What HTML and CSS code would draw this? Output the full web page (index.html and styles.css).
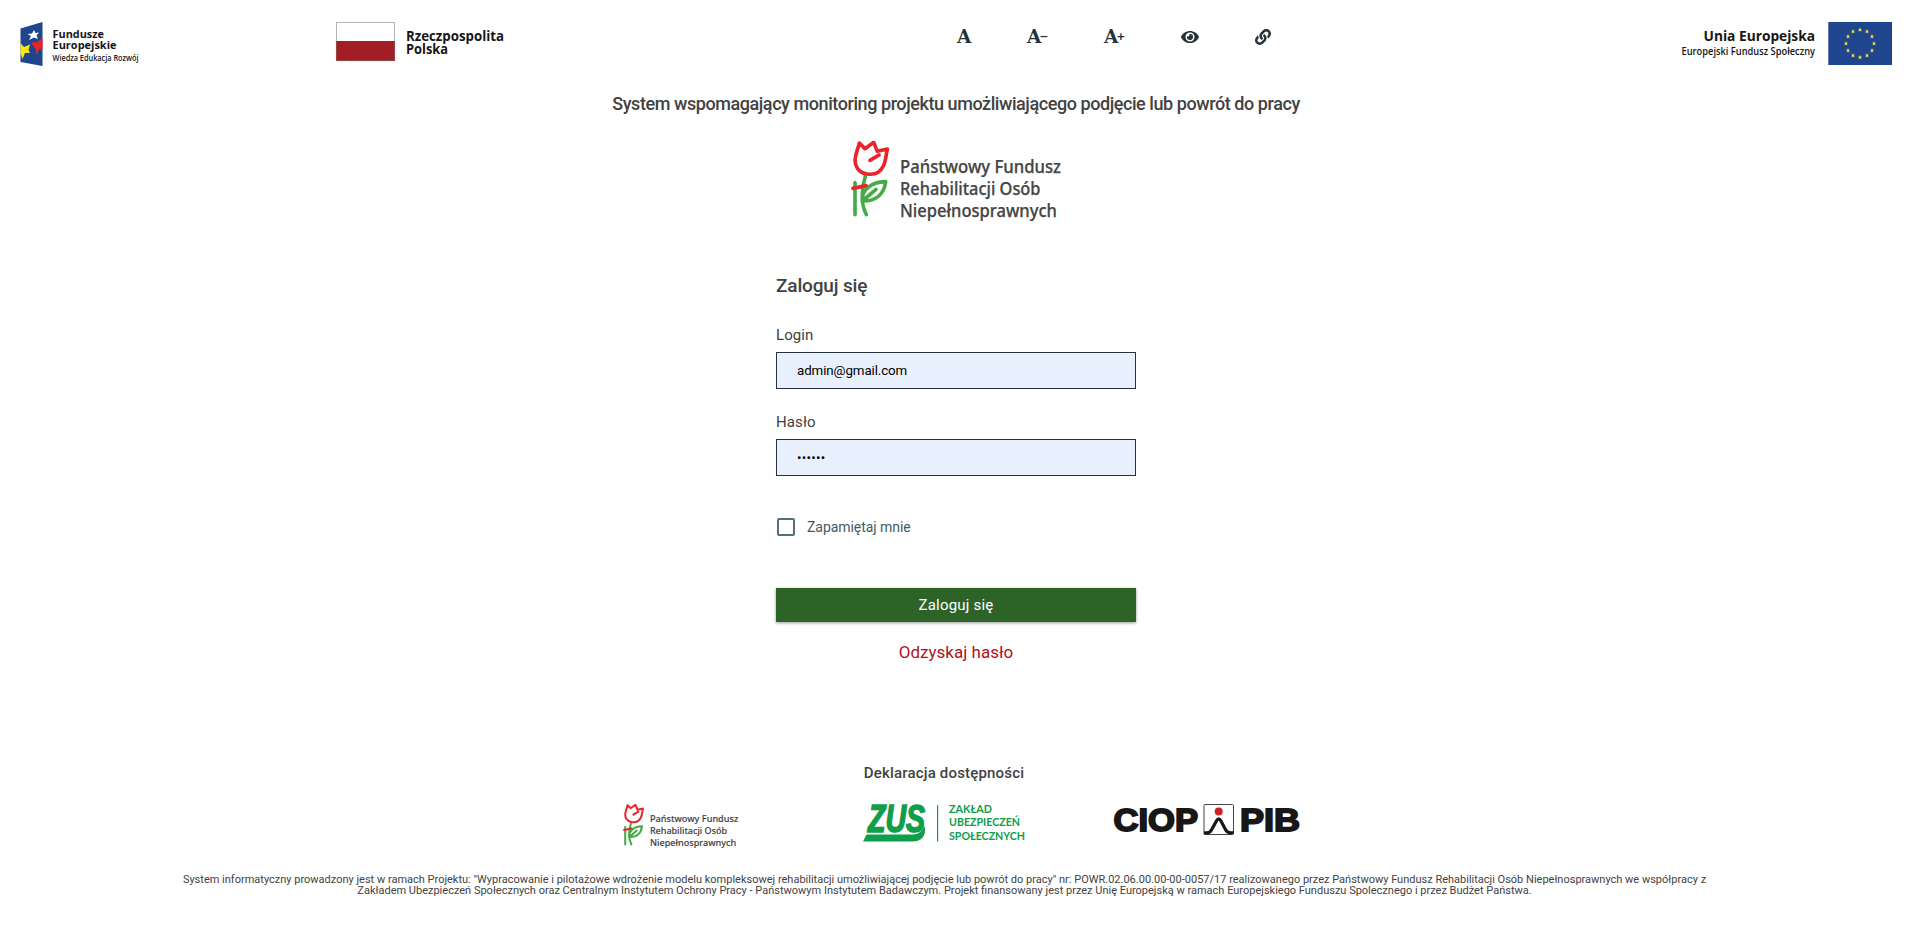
FILE: index.html
```html
<!DOCTYPE html>
<html lang="pl">
<head>
<meta charset="utf-8">
<title>Zaloguj się</title>
<link rel="stylesheet" href="styles.css">
</head>
<body>
<svg width="0" height="0" class="defs">
  <defs>
    <path id="star" d="M0-2.5 .6-.8 2.4-.8 1-.3 1.5 2 0 1-1.5 2-1-.3-2.4-.8-.6-.8Z"/>
    <symbol id="pfron" viewBox="0 0 213 80">
      <g transform="translate(0 -1) scale(.33333) translate(-63 -30)" fill="none" stroke-width="11" stroke-linecap="round" stroke-linejoin="round">
        <path stroke="#45ab48" d="M75 158V254M106 140C94 176 92 220 109 254M97 216C93 180 122 157 167 155C162 192 138 214 97 213L138 178"/>
        <path stroke="#e9242a" d="M88 39L105 56L131 37L142 64L172 57C168 74 168 92 160 108C151 127 133 135 112 132C86 129 72 108 76 84C78 65 86 52 88 39ZM120 91L147 75M69 175L108 167"/>
      </g>
      <text font-family="'Noto Sans', sans-serif" font-size="17.500" font-weight="500" fill="#444545" stroke="#444545" stroke-width=".25"><tspan x="49" y="32" textLength="161" lengthAdjust="spacingAndGlyphs">Państwowy Fundusz</tspan><tspan x="49" y="54" textLength="140.500" lengthAdjust="spacingAndGlyphs">Rehabilitacji Osób</tspan><tspan x="49" y="75.800" textLength="157" lengthAdjust="spacingAndGlyphs">Niepełnosprawnych</tspan></text>
    </symbol>
  </defs>
</svg>

<header class="top">
  <svg class="logo-fe" width="122" height="46" viewBox="0 0 122 46">
    <path fill="#1f458f" d="M.5 6.500 22.500 0V44L.5 40Z"/>
    <path fill="#f9e814" d="M.5 21 4 25 10 22.500 8.500 28 10 31 5 31 2.500 37 .5 31Z"/>
    <path fill="#e52329" d="M11 20.500 17 20 22.500 16V28L19 27 17 33 15 26Z"/>
    <path fill="#fff" d="M14 8 15.500 11 19 10.500 16.500 13.500 18 17 14 15.500 9 18 11 14 7.500 12 12 11.500Z"/>
    <text font-family="'Open Sans', sans-serif" font-size="11" font-weight="700" fill="#161616"><tspan x="32.500" y="16.400" textLength="51.500" lengthAdjust="spacingAndGlyphs">Fundusze</tspan><tspan x="32.500" y="27.400" textLength="64" lengthAdjust="spacingAndGlyphs">Europejskie</tspan><tspan x="32.500" y="38.500" font-size="8" font-weight="600" textLength="86" lengthAdjust="spacingAndGlyphs">Wiedza Edukacja Rozwój</tspan></text>
  </svg>
  <svg class="logo-rp" width="172" height="46" viewBox="0 0 172 46">
    <rect x=".5" y=".5" width="58" height="38" fill="#fff" stroke="#b4b4b4"/>
    <path fill="#a31d26" d="M0 19H59V39H0Z"/>
    <path fill="none" stroke="#8f5a50" stroke-width=".8" d="M.4 19V38.600H58.600V19"/>
    <text font-family="'Open Sans', sans-serif" fill="#161616" font-size="13.500" font-weight="700"><tspan x="70" y="18.600" textLength="98" lengthAdjust="spacingAndGlyphs">Rzeczpospolita</tspan><tspan x="70" y="31.600" textLength="42" lengthAdjust="spacingAndGlyphs">Polska</tspan></text>
  </svg>
  <nav class="tools">
    <a class="letter">A</a>
    <a class="letter">A<span class="sign">−</span></a>
    <a class="letter">A<span class="sign">+</span></a>
    <svg width="18" height="16" viewBox="0 0 576 512"><path fill="#263238" d="M572.52 241.400C518.290 135.590 410.930 64 288 64S57.680 135.640 3.480 241.410a32.350 32.350 0 0 0 0 29.190C57.710 376.410 165.070 448 288 448s230.320-71.640 284.520-177.410a32.350 32.350 0 0 0 0-29.190zM288 400a144 144 0 1 1 144-144 143.930 143.930 0 0 1-144 144zm0-240a95.310 95.310 0 0 0-25.310 3.790 47.850 47.850 0 0 1-66.900 66.900A95.780 95.780 0 1 0 288 160z"/></svg>
    <svg width="16" height="16" viewBox="0 0 512 512"><path fill="#263238" d="M326.612 185.391c59.747 59.809 58.927 155.698.36 214.590-.11.12-.24.25-.36.37l-67.200 67.200c-59.270 59.270-155.699 59.262-214.960 0-59.270-59.260-59.270-155.700 0-214.960l37.106-37.106c9.840-9.840 26.786-3.300 27.294 10.606.648 17.722 3.826 35.527 9.690 52.721 1.986 5.822.567 12.262-3.783 16.612l-13.087 13.087c-28.026 28.026-28.905 73.660-1.155 101.960 28.024 28.579 74.086 28.749 102.325.51l67.200-67.190c28.191-28.191 28.073-73.757 0-101.830-3.701-3.694-7.429-6.564-10.341-8.569a16.037 16.037 0 0 1-6.947-12.606c-.396-10.567 3.348-21.456 11.698-29.806l21.054-21.055c5.521-5.521 14.182-6.199 20.584-1.731a152.482 152.482 0 0 1 20.522 17.197zM467.547 44.449c-59.261-59.262-155.690-59.270-214.960 0l-67.200 67.200c-.12.12-.25.25-.36.37-58.566 58.892-59.387 154.781.36 214.590a152.454 152.454 0 0 0 20.521 17.196c6.402 4.468 15.064 3.789 20.584-1.731l21.054-21.055c8.350-8.350 12.094-19.239 11.698-29.806a16.037 16.037 0 0 0-6.947-12.606c-2.912-2.005-6.640-4.875-10.341-8.569-28.073-28.073-28.191-73.639 0-101.830l67.200-67.190c28.239-28.239 74.300-28.069 102.325.51 27.750 28.300 26.872 73.934-1.155 101.960l-13.087 13.087c-4.350 4.350-5.769 10.790-3.783 16.612 5.864 17.194 9.042 34.999 9.690 52.721.509 13.906 17.454 20.446 27.294 10.606l37.106-37.106c59.271-59.259 59.271-155.699.001-214.959z"/></svg>
  </nav>
  <svg class="logo-ue" width="212" height="46" viewBox="0 0 212 46">
    <text font-family="'Open Sans', sans-serif" fill="#161616" font-size="15" font-weight="700"><tspan x="23.500" y="18.500" textLength="111.500" lengthAdjust="spacingAndGlyphs">Unia Europejska</tspan><tspan x="1.500" y="32.500" font-size="10.500" font-weight="600" textLength="133.500" lengthAdjust="spacingAndGlyphs">Europejski Fundusz Społeczny</tspan></text>
    <rect x="148.300" y="0" width="63.700" height="43" fill="#1f458f"/>
    <g fill="#f4e13c">
      <use href="#star" x="180" y="7.700"/><use href="#star" x="187" y="9.500"/><use href="#star" x="192" y="14.600"/><use href="#star" x="194" y="21.500"/>
      <use href="#star" x="192" y="28.500"/><use href="#star" x="187" y="33.600"/><use href="#star" x="180" y="35.300"/><use href="#star" x="173" y="33.600"/>
      <use href="#star" x="168" y="28.500"/><use href="#star" x="166" y="21.500"/><use href="#star" x="168" y="14.600"/><use href="#star" x="173" y="9.500"/>
    </g>
  </svg>
</header>

<main class="main">
  <h1 class="system">System wspomagający monitoring projektu umożliwiającego podjęcie lub powrót do pracy</h1>
  <svg class="pfron" width="213" height="80"><use href="#pfron"/></svg>
  <form class="form">
    <h2 class="title">Zaloguj się</h2>
    <label class="label" for="login">Login</label>
    <input class="field" id="login" type="text" value="admin@gmail.com">
    <label class="label" for="pass">Hasło</label>
    <input class="field" id="pass" type="password" value="haslo1">
    <div class="remember"><span class="box"></span><span class="remember-text">Zapamiętaj mnie</span></div>
    <button class="submit" type="button">Zaloguj się</button>
    <a class="recover">Odzyskaj hasło</a>
  </form>
</main>

<footer class="footer">
  <a class="declaration">Deklaracja dostępności</a>
  <div class="partners">
    <svg class="pfron-small" width="117" height="44"><use href="#pfron"/></svg>
    <svg class="zus" width="164" height="40" viewBox="0 0 164 40">
      <g fill="#109e4a">
        <text x="5" y="27.500" font-family="'Liberation Sans', sans-serif" font-size="38" font-weight="700" font-style="italic" stroke="#109e4a" stroke-width="1.600" textLength="57" lengthAdjust="spacingAndGlyphs">ZUS</text>
        <path d="M3.500 30.500H50Q58 30.500 61.500 22C64 32 58 37.500 50 37.500H0Z"/>
        <path d="M74 1H75.200V37.500H74Z"/>
        <text font-family="Lato, sans-serif" font-size="10.500" font-weight="700"><tspan x="86" y="9" textLength="43" lengthAdjust="spacingAndGlyphs">ZAKŁAD</tspan><tspan x="86" y="22" textLength="71" lengthAdjust="spacingAndGlyphs">UBEZPIECZEŃ</tspan><tspan x="86" y="35.500" textLength="76" lengthAdjust="spacingAndGlyphs">SPOŁECZNYCH</tspan></text>
      </g>
    </svg>
    <svg class="ciop" width="190" height="34" viewBox="0 0 190 34">
      <g font-family="'Liberation Sans', sans-serif" font-weight="700" font-size="31" fill="#171717" stroke="#171717" stroke-width="1.800">
        <text x="1.500" y="26.500" textLength="84.500" lengthAdjust="spacingAndGlyphs">CIOP</text>
        <text x="128" y="26.500" textLength="60" lengthAdjust="spacingAndGlyphs">PIB</text>
      </g>
      <rect x="92" y=".5" width="29.500" height="30" rx="1" fill="#fff" stroke="#444"/>
      <circle cx="106.700" cy="7.500" r="4" fill="#cb2026"/>
      <path fill="none" stroke="#171717" stroke-width="3.200" d="M92 28.500Q98 30 100 25L104.700 16.500Q106.700 13 108.700 16.500L113.200 25Q115.500 30 121.500 28.500"/>
    </svg>
  </div>
  <p class="info">System informatyczny prowadzony jest w ramach Projektu: "Wypracowanie i pilotażowe wdrożenie modelu kompleksowej rehabilitacji umożliwiającej podjęcie lub powrót do pracy" nr: POWR.02.06.00.00-00-0057/17 realizowanego przez Państwowy Fundusz Rehabilitacji Osób Niepełnosprawnych we współpracy z<br>Zakładem Ubezpieczeń Społecznych oraz Centralnym Instytutem Ochrony Pracy - Państwowym Instytutem Badawczym. Projekt finansowany jest przez Unię Europejską w ramach Europejskiego Funduszu Spolecznego i przez Budżet Państwa.</p>
</footer>
</body>
</html>
```
FILE: styles.css
```css
* { box-sizing: border-box; margin: 0; padding: 0; }
body { background: #fff; color: #424242; font-family: Roboto, sans-serif; width: 1909px; height: 940px; overflow: hidden; }
svg { display: block; flex: none; overflow: visible; }
.defs { position: absolute; }

.top { display: grid; grid-template-columns: 316px 620px 1fr 212px; padding: 22px 17px 0 20px; height: 90px; }
.tools { display: grid; grid-template-columns: 70px 77px 77px 74px 16px; align-items: center; height: 28px; align-self: start; color: #263238; padding-left: 1px; }
.letter { display: flex; align-items: center; padding-top: 1px; font: bold 18.5px/28px "DejaVu Serif", serif; }
.sign { font: bold 11px/28px "DejaVu Sans", sans-serif; margin-left: -2px; }

.main { display: flex; flex-direction: column; align-items: center; }
.system { font-size: 18px; line-height: 28px; font-weight: 500; margin-left: 3px; letter-spacing: -0.43px; white-space: nowrap; }
.pfron { margin: 23px 0 0 5px; }
.form { width: 360px; margin: 50px 0 0 3px; display: flex; flex-direction: column; }
.title { font-size: 19px; line-height: 30px; font-weight: 500; letter-spacing: -0.15px; }
.label { font-size: 15px; line-height: 20px; margin-top: 23px; letter-spacing: 0.1px; }
.title + .label { margin-top: 24px; }
.field { height: 37px; margin-top: 7px; border: 1px solid #263238; background: #e8f0fe; padding: 0 20px; font: 13.333px Roboto, sans-serif; letter-spacing: -0.1px; color: #000; border-radius: 0; outline: 0; }
.field[type="password"] { letter-spacing: 0.25px; }
.remember { display: flex; align-items: center; gap: 12px; height: 20px; margin: 41px 0 0 1px; }
.box { width: 18px; height: 18px; border: 2px solid #546e7a; border-radius: 2px; }
.remember-text { font-size: 14px; line-height: 20px; color: #455a64; letter-spacing: -0.05px; }
.submit { height: 34px; margin-top: 51px; border: 0; background: #2e6328; color: #fff; font: 15px/34px Roboto, sans-serif; letter-spacing: 0.2px; box-shadow: 0 1px 3px rgba(0,0,0,.4); }
.recover { align-self: center; margin-top: 18px; font-size: 17px; line-height: 24px; color: #b1101d; letter-spacing: 0.02px; }

.footer { display: flex; flex-direction: column; align-items: center; margin-top: 99px; }
.declaration { font-size: 15px; line-height: 20px; font-weight: 500; letter-spacing: 0.18px; margin-right: 21px; }
.partners { display: flex; width: 680px; margin: 21px 0 0 16px; height: 44px; }
.zus { margin-left: 123px; }
.ciop { margin-left: 85px; }
.info { font-size: 11px; line-height: 11px; text-align: center; margin: 26px 0 0 -20px; white-space: nowrap; }
```
